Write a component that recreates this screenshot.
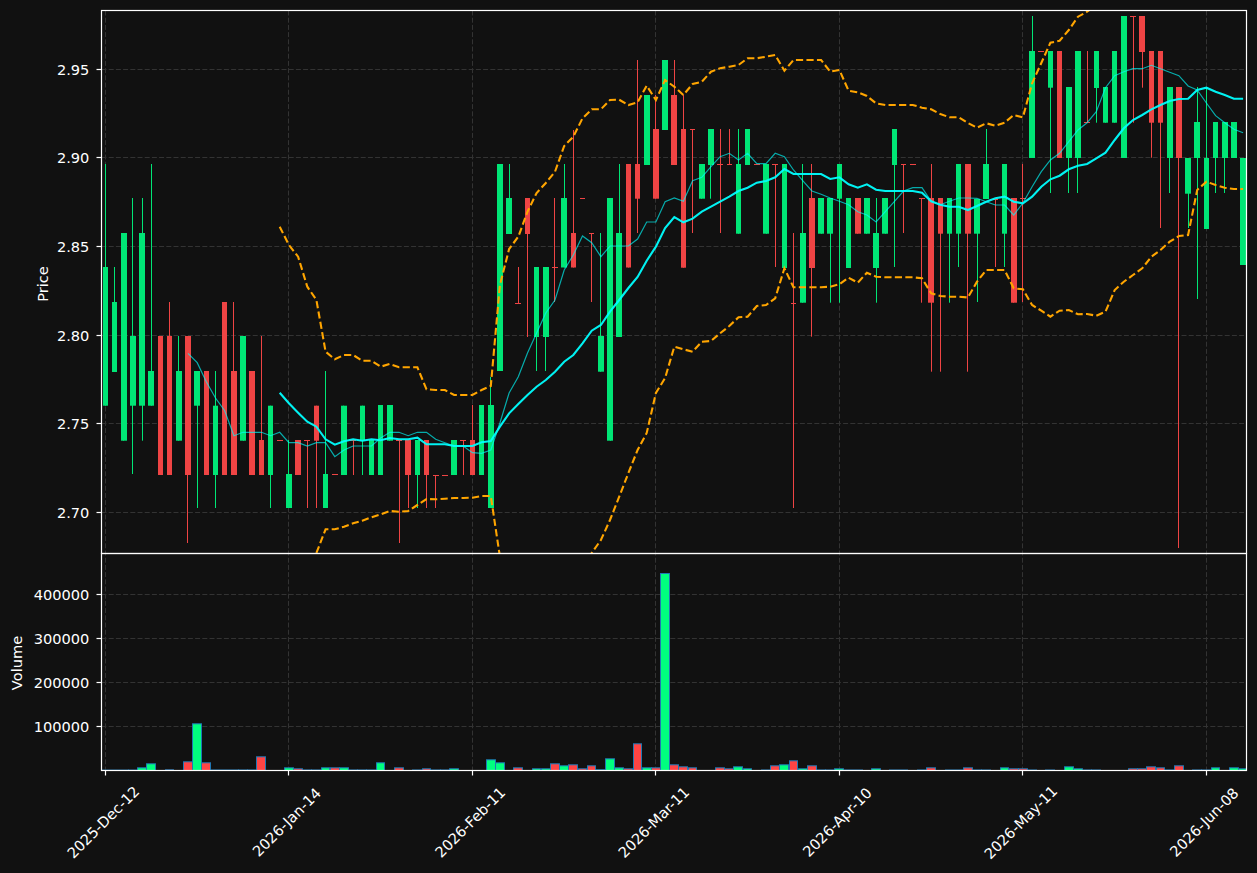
type Candle = [string, number, number, number?, number?];

const X0 = 105.4;
const STEP = 9.175;
const xAt = (i: number) => X0 + i * STEP;
// lines land on pixel centres, like the plotting backend does
const snap = (v: number) => Math.floor(v) + 0.5;

// color, body top, body bottom, wick top, wick bottom (all in chart pixels)
const candles: Candle[] = [
  ["g", 267, 405.7, 164], ["g", 302, 372, 267], ["g", 233, 440.7], ["g", 336, 405.7, 198, 474], ["g", 233, 405.7, 198, 440.7],
  ["g", 371, 405.7, 164], ["r", 336, 475], ["r", 336, 475, 302], ["g", 371, 440.7, 336], ["r", 336, 475, 336, 543],
  ["g", 371, 405.7, 371, 508], ["r", 371, 475], ["g", 405.7, 475, 371, 508], ["r", 302, 475], ["r", 371, 475, 302],
  ["g", 336, 440.7], ["r", 371, 475], ["r", 440, 475, 336], ["g", 405.7, 475, 405.7, 508], ["r", 440, 440],
  ["g", 474, 508, 440], ["r", 440, 475], ["r", 440, 440, 440, 508], ["r", 405.7, 440.7, 405.7, 508], ["g", 474, 508, 371],
  ["r", 474, 474], ["g", 405.7, 475], ["r", 440, 440, 440, 475], ["g", 405.7, 440.7, 405.7, 475], ["g", 440, 475],
  ["g", 405, 475], ["g", 405, 440.7], ["r", 440, 440, 440, 543], ["r", 440, 475, 440, 508], ["g", 440, 475, 440, 508],
  ["r", 440, 475, 440, 508], ["r", 475, 475, 475, 508], ["r", 475, 475], ["g", 440, 475], ["r", 440, 440, 440, 475],
  ["r", 440, 475, 405], ["g", 405, 475], ["g", 405, 508, 377], ["g", 164, 371], ["g", 198, 234, 164],
  ["r", 303, 303, 267, 303], ["r", 198, 234, 198, 337], ["g", 267, 337, 267, 371], ["g", 267, 337, 267, 371], ["r", 267, 267, 198, 302],
  ["g", 198, 267.5, 164], ["r", 233, 267.5, 130], ["r", 198, 198], ["r", 233, 233, 233, 302], ["g", 336, 371.7, 233],
  ["g", 198, 440.7], ["g", 233, 337, 164], ["r", 164, 267.5], ["r", 164, 198.7, 60, 233], ["g", 95, 165],
  ["r", 129, 198.7, 95], ["g", 60, 130], ["r", 95, 165, 60], ["r", 129, 267.7, 95], ["r", 129, 129, 129, 233],
  ["g", 164, 198.7], ["g", 129, 165, 129, 198.7], ["r", 164, 164, 129, 233], ["r", 164, 164, 129, 164], ["g", 164, 233.7, 129],
  ["g", 129, 165], ["r", 164, 164], ["g", 164, 233.7], ["r", 164, 164, 164, 267], ["g", 164, 268],
  ["r", 303, 303, 233, 508], ["g", 233, 302.7, 164], ["r", 198, 268, 164, 336.7], ["g", 198, 233.7], ["g", 198, 233.7, 198, 302.7],
  ["g", 164, 198.7, 164, 302.7], ["g", 198, 268], ["r", 198, 233.7], ["g", 198, 233.7], ["g", 233, 268, 198, 302.7],
  ["g", 198, 233.7], ["g", 129, 165, 129, 267], ["r", 164, 164, 164, 233], ["r", 164, 164], ["r", 198, 198, 198, 302.7],
  ["r", 198, 302.7, 164, 371.7], ["r", 198, 233.7, 198, 371.7], ["g", 198, 233.7, 198, 302.7], ["g", 164, 233.7, 164, 267], ["r", 164, 233.7, 164, 371.7],
  ["g", 199, 233.7, 199, 302], ["g", 164, 199, 129], ["r", 199, 199, 199, 267], ["g", 164, 233.7, 164, 267], ["r", 198, 302.7],
  ["r", 198, 198, 164, 302], ["g", 51, 158, 16], ["r", 51, 51], ["g", 51, 87.7, 51, 193], ["r", 51, 158],
  ["g", 87, 158, 87, 193], ["g", 51, 158, 51, 193], ["r", 122.7, 122.7, 51, 122.7], ["g", 51, 88, 51, 122.7], ["g", 87, 122.7],
  ["g", 51, 122.7], ["g", 16, 158], ["r", 16, 16, 16, 122.7], ["r", 16, 52, 16, 87.7], ["r", 51, 122.7, 51, 157.7],
  ["r", 51, 122.7, 51, 228], ["g", 87, 158, 87, 193], ["r", 87, 158, 87, 548], ["g", 158, 193.7, 158, 228], ["g", 122, 158, 87, 299],
  ["g", 158, 229, 87], ["g", 122, 158, 122, 193], ["g", 122, 158, 122, 193], ["g", 122, 158], ["g", 158, 265],
];

// bar heights in pixels, zero means no bar
const volumes = [
  0.4, 0.4, 0.4, 0.4, 2.7, 6.7, 0, 0.7, 0, 8.7, 46.7, 7.7, 0.5, 0.5, 0.5, 0.5, 0.5, 13.7, 0, 0,
  2.7, 1.7, 0.5, 0.5, 2.7, 2.7, 2.7, 0.5, 0.5, 0.5, 7.7, 0, 2.7, 0, 0.5, 1.7, 0.5, 0.5, 1.7, 0,
  0, 0, 10.7, 7.7, 0, 2.7, 0, 1.7, 1.7, 6.7, 4.7, 5.7, 1.7, 4.7, 0.7, 11.7, 2.7, 1.7, 26.7, 2.7,
  2.7, 197, 5.7, 3.7, 2.7, 0, 0, 2.7, 1.7, 3.7, 1.7, 0, 0.5, 4.7, 5.7, 9.7, 1.7, 4.7, 0.5, 0.5,
  1.7, 0.5, 0.5, 0, 1.7, 0, 0.5, 0.5, 0, 0.5, 2.7, 0, 0.5, 0.5, 2.7, 0.5, 0.5, 0, 2.7, 1.7,
  1.7, 0.5, 0, 0.5, 0, 3.7, 1.7, 0.5, 0.5, 0, 0, 0, 1.7, 1.7, 3.7, 2.7, 0.5, 4.7, 0, 0.5,
  0.5, 2.7, 0, 2.7, 1.7,
];

// thin MA starts at candle 9
const thinLine = [
  353.3, 362.7, 381.7, 398, 410.7, 435.7, 432.3, 432.3, 432.3, 435.7, 432.3, 442.7, 442.7, 446, 442.7, 442.7, 456.7, 450, 446, 446,
  446, 438, 432.3, 432.3, 435.7, 432.3, 432.3, 439.3, 442.7, 446, 446, 452.7, 453.3, 450, 423, 393, 376.7, 353, 333, 313,
  300, 270, 255, 236, 242.7, 256.7, 246, 246, 246, 239, 222, 222, 201.7, 198, 201.3, 180.7, 177.3, 166.7, 156.7, 153.3,
  160, 153.3, 163.7, 163.7, 153.3, 156.7, 170, 180.7, 191, 194.3, 198, 201.3, 204.7, 211.7, 215, 222, 211.7, 201.3, 191, 187.7,
  187.7, 201.3, 204.7, 201.3, 198, 198, 198.3, 201.7, 205, 205, 215, 203, 186.7, 171.7, 160, 153.3, 141.7, 130, 122.7, 111.7,
  87.7, 75.7, 71.7, 68.7, 68.7, 65.3, 68.7, 72.3, 75.7, 86, 90, 103, 115.7, 122.7, 129.3, 132.7,
];

// thick MA starts at candle 19
const thickLine = [
  392.7, 403.3, 412.7, 421.7, 426.7, 439.3, 444.7, 441.3, 439.3, 440.7, 439.3, 440.3, 438, 439.3, 439.3, 437.7, 444.3, 444.3, 444.3, 446,
  446, 446, 442.3, 441, 426.7, 413.3, 404, 395, 386.7, 380, 371.7, 361.7, 355, 343.3, 330.7, 325, 311.7, 300, 288, 277,
  260.7, 246.7, 228, 217, 222.3, 218.7, 211.7, 206.7, 201.7, 196.7, 191, 187.7, 182.7, 181, 177.3, 169, 174, 174, 174, 174,
  179, 177.3, 184.3, 187.7, 184.3, 189.7, 191, 191, 191, 191, 192.7, 201.3, 204.7, 206.7, 206.7, 210, 206, 201.7, 198.3, 196.7,
  201.7, 203.3, 196.7, 186.7, 179.3, 175.7, 169.3, 165.7, 164, 158.3, 152.7, 140, 128.3, 120, 115, 109.3, 105, 101, 99, 98.7,
  90, 87.7, 91.7, 95, 98.7, 98.7,
];

// bollinger bands start at candle 19
const upperBand = [
  226.7, 245, 256.7, 286.7, 300, 351.7, 359.3, 355, 355, 360.7, 360.7, 366.7, 364, 367.3, 367.3, 367.3, 389.3, 390, 390, 395,
  395, 395, 390, 386, 285, 249, 236.7, 211.7, 193, 183, 171.7, 146, 136.7, 118.3, 109.3, 109.3, 100, 99.7, 105, 102.3,
  85.7, 100, 80, 86.7, 95, 84, 81.7, 71.7, 68.3, 66.7, 65, 58.3, 58.3, 56.7, 55, 70.7, 60, 60, 60, 60,
  71.7, 70, 90.7, 92.3, 96, 103.3, 105, 105, 105, 105, 107.7, 109.3, 114, 117.3, 117.3, 123, 127.7, 123.3, 125.7, 122.7,
  115, 117.3, 83.3, 63, 42.7, 40.7, 30, 16.7, 11.7, 5, -2, -8,
];

const lowerBand = [
  640, 620, 600, 575, 553, 529.3, 529.3, 526.7, 523.3, 520.7, 517.3, 514.3, 511, 511.7, 511, 505, 499, 499.3, 498.7, 498,
  498, 497.7, 496, 496, 556.7, 600, 620, 640, 650, 650, 640, 620, 600, 566, 553, 540, 520, 496.7, 473, 450,
  433, 393, 378, 346.7, 349.3, 351.7, 341.7, 341, 333.3, 326, 317.3, 316.7, 306, 305, 298.3, 268.3, 287.3, 287.3, 287.3, 287.3,
  286.7, 284.3, 277.7, 282.7, 272.7, 276.7, 277.3, 277.3, 277.3, 277.3, 278.3, 293.3, 296, 296.7, 296.7, 297.5, 281.7, 270, 270, 270,
  288.3, 289.3, 305, 310.7, 316.7, 310.7, 310, 314.3, 314, 315.7, 311.7, 290, 281.7, 275, 268.3, 256.7, 250, 241.7, 236, 235,
  190, 181.7, 185, 187.7, 189, 189,
];

const priceTicks = [
  { label: "2.95", y: 69.4 },
  { label: "2.90", y: 157.6 },
  { label: "2.85", y: 246.4 },
  { label: "2.80", y: 335.3 },
  { label: "2.75", y: 423.5 },
  { label: "2.70", y: 512.4 },
];

const volumeTicks = [
  { label: "400000", y: 594.5 },
  { label: "300000", y: 638.5 },
  { label: "200000", y: 682.5 },
  { label: "100000", y: 726.4 },
];

const dateTicks = [
  { label: "2025-Dec-12", i: 0 },
  { label: "2026-Jan-14", i: 20 },
  { label: "2026-Feb-11", i: 40 },
  { label: "2026-Mar-11", i: 60 },
  { label: "2026-Apr-10", i: 80 },
  { label: "2026-May-11", i: 100 },
  { label: "2026-Jun-08", i: 120 },
];

const LEFT = 101.5;
const RIGHT = 1246.5;
const TOP = 10.5;
const MID = 553.5;
const BOTTOM = 770.5;

const points = (ys: number[], start: number) =>
  ys.map((y, i) => `${xAt(start + i).toFixed(1)},${y}`).join(" ");

const upColor = "#00e676";
const downColor = "#ef4444";

export default function App() {
  return (
    <div className="h-[873px] w-full overflow-hidden bg-[#111111]">
      <svg
        width={1257}
        height={873}
        viewBox="0 0 1257 873"
        className="block font-['DejaVu_Sans',sans-serif] text-[14.6px]"
      >
        <defs>
          <clipPath id="price-clip">
            <rect x={LEFT} y={TOP} width={RIGHT - LEFT} height={MID - TOP} />
          </clipPath>
          <clipPath id="volume-clip">
            <rect x={LEFT} y={MID} width={RIGHT - LEFT} height={BOTTOM - MID} />
          </clipPath>
        </defs>

        {/* Grid */}
        <g stroke="#333333" strokeWidth={1} strokeDasharray="5 2.2" fill="none">
          {dateTicks.map((t) => (
            <line key={t.i} x1={snap(xAt(t.i))} x2={snap(xAt(t.i))} y1={TOP} y2={BOTTOM} />
          ))}
          {[...priceTicks, ...volumeTicks].map((t) => (
            <line key={t.label} x1={LEFT} x2={RIGHT} y1={snap(t.y)} y2={snap(t.y)} />
          ))}
        </g>

        {/* Candles */}
        <g clipPath="url(#price-clip)">
          {candles.map(([c, top, bot, wickTop, wickBot], i) => {
            const color = c === "g" ? upColor : downColor;
            const x = xAt(i);
            const wx = snap(x);
            const left = Math.round(x - 2.8);
            const right = Math.round(x + 2.8);
            return (
              <g key={i}>
                <line x1={wx} x2={wx} y1={wickTop ?? top} y2={wickBot ?? bot} stroke={color} strokeWidth={1} />
                {top === bot ? (
                  <line x1={left} x2={right} y1={snap(top)} y2={snap(top)} stroke={color} strokeWidth={1} />
                ) : (
                  <rect x={left} y={top} width={right - left} height={bot - top} fill={color} />
                )}
              </g>
            );
          })}

          {/* Bands and averages */}
          <polyline
            points={points(upperBand, 19)}
            fill="none"
            stroke="#ffa500"
            strokeWidth={2.1}
            strokeDasharray="7.2 3.3"
          />
          <polyline
            points={points(lowerBand, 19)}
            fill="none"
            stroke="#ffa500"
            strokeWidth={2.1}
            strokeDasharray="7.2 3.3"
          />
          <polyline points={points(thinLine, 9)} fill="none" stroke="#00ffff" strokeOpacity={0.65} strokeWidth={1.2} />
          <polyline points={points(thickLine, 19)} fill="none" stroke="#00ffff" strokeWidth={2.1} strokeOpacity={0.95} />
        </g>

        {/* Volume bars */}
        <g clipPath="url(#volume-clip)">
          {volumes.map((h, i) => {
            if (h === 0) return null;
            const left = snap(xAt(i) - 4.5);
            const right = snap(xAt(i) + 4.3);
            return (
              <rect
                key={i}
                x={left}
                y={BOTTOM - h}
                width={right - left}
                height={h}
                fill={candles[i][0] === "g" ? "#00ff7f" : "#ff4444"}
                stroke="#1f77b4"
                strokeWidth={1}
              />
            );
          })}
        </g>

        {/* Axes */}
        <g fill="none" stroke="#ffffff" strokeWidth={1.2}>
          <rect x={LEFT} y={TOP} width={RIGHT - LEFT} height={MID - TOP} />
          <rect x={LEFT} y={MID} width={RIGHT - LEFT} height={BOTTOM - MID} />
          {[...priceTicks, ...volumeTicks].map((t) => (
            <line key={t.label} x1={LEFT - 5} x2={LEFT} y1={snap(t.y)} y2={snap(t.y)} />
          ))}
          {dateTicks.map((t) => (
            <line key={t.i} x1={snap(xAt(t.i))} x2={snap(xAt(t.i))} y1={BOTTOM} y2={BOTTOM + 5} />
          ))}
        </g>

        {/* Labels */}
        <g fill="#ffffff">
          {[...priceTicks, ...volumeTicks].map((t) => (
            <text key={t.label} x={89.4} y={t.y + 5.6} textAnchor="end">
              {t.label}
            </text>
          ))}
          {dateTicks.map((t) => (
            <text
              key={t.i}
              transform={`translate(${xAt(t.i) - 2.4},822) rotate(-45)`}
              textAnchor="middle"
              dominantBaseline="central"
            >
              {t.label}
            </text>
          ))}
          <text transform="translate(48,284) rotate(-90)" textAnchor="middle">
            Price
          </text>
          <text transform="translate(22,663) rotate(-90)" textAnchor="middle">
            Volume
          </text>
        </g>
      </svg>
    </div>
  );
}
